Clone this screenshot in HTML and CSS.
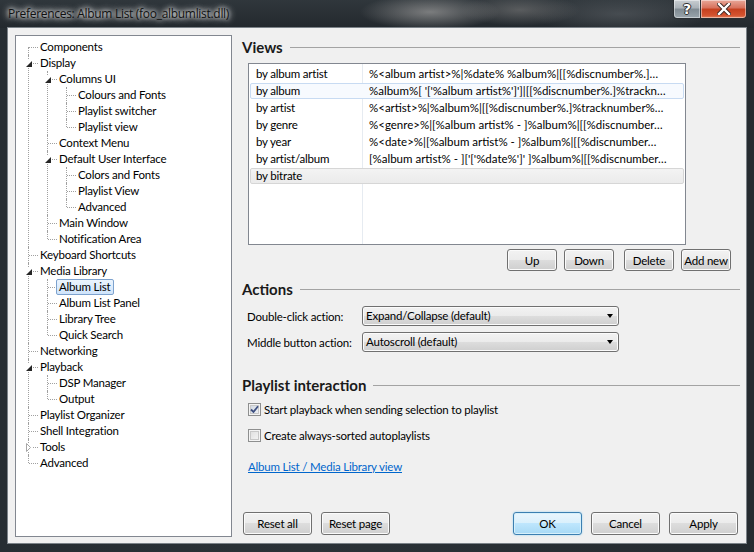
FILE: index.html
```html
<!DOCTYPE html>
<html lang="en">
<head>
<meta charset="utf-8">
<title>Preferences: Album List (foo_albumlist.dll)</title>
<link rel="stylesheet" href="styles.css">
</head>
<body>
<div class="window">
  <!-- Caption -->
  <div class="titlebar">
    <span class="caption">Preferences: Album List (foo_albumlist.dll)</span>
    <div class="caption-buttons">
      <span class="cap-btn help">?</span>
      <span class="cap-btn close">
        <svg width="14" height="12" viewBox="0 0 14 12">
          <path d="M2 1 L12 11 M12 1 L2 11" stroke="#3a2520" stroke-width="4.2" stroke-linecap="square"/>
          <path d="M2 1 L12 11 M12 1 L2 11" stroke="#fff" stroke-width="2.4" stroke-linecap="square"/>
        </svg>
      </span>
    </div>
  </div>

  <div class="client">
    <!-- Page tree -->
    <div class="tree">
      <ul class="tree-root">
        <li><span class="label">Components</span></li>
        <li><span class="exp open"></span><span class="label">Display</span>
          <ul>
            <li><span class="exp open"></span><span class="label">Columns UI</span>
              <ul>
                <li><span class="label">Colours and Fonts</span></li>
                <li><span class="label">Playlist switcher</span></li>
                <li><span class="label">Playlist view</span></li>
              </ul>
            </li>
            <li><span class="label">Context Menu</span></li>
            <li><span class="exp open"></span><span class="label">Default User Interface</span>
              <ul>
                <li><span class="label">Colors and Fonts</span></li>
                <li><span class="label">Playlist View</span></li>
                <li><span class="label">Advanced</span></li>
              </ul>
            </li>
            <li><span class="label">Main Window</span></li>
            <li><span class="label">Notification Area</span></li>
          </ul>
        </li>
        <li><span class="label">Keyboard Shortcuts</span></li>
        <li><span class="exp open"></span><span class="label">Media Library</span>
          <ul>
            <li><span class="label selected">Album List</span></li>
            <li><span class="label">Album List Panel</span></li>
            <li><span class="label">Library Tree</span></li>
            <li><span class="label">Quick Search</span></li>
          </ul>
        </li>
        <li><span class="label">Networking</span></li>
        <li><span class="exp open"></span><span class="label">Playback</span>
          <ul>
            <li><span class="label">DSP Manager</span></li>
            <li><span class="label">Output</span></li>
          </ul>
        </li>
        <li><span class="label">Playlist Organizer</span></li>
        <li><span class="label">Shell Integration</span></li>
        <li><span class="exp shut"></span><span class="label">Tools</span></li>
        <li><span class="label">Advanced</span></li>
      </ul>
    </div>

    <!-- Album List page -->
    <div class="page">
      <div class="section-head">Views</div>
      <div class="listview">
        <div class="lv-row"><span class="lv-name">by album artist</span><span class="lv-fmt">%&lt;album artist&gt;%|%date% %album%|[[%discnumber%.]…</span></div>
        <div class="lv-row selected"><span class="lv-name">by album</span><span class="lv-fmt">%album%[ '['%album artist%']']|[[%discnumber%.]%trackn…</span></div>
        <div class="lv-row"><span class="lv-name">by artist</span><span class="lv-fmt">%&lt;artist&gt;%|%album%|[[%discnumber%.]%tracknumber%…</span></div>
        <div class="lv-row"><span class="lv-name">by genre</span><span class="lv-fmt">%&lt;genre&gt;%|[%album artist% - ]%album%|[[%discnumber…</span></div>
        <div class="lv-row"><span class="lv-name">by year</span><span class="lv-fmt">%&lt;date&gt;%|[%album artist% - ]%album%|[[%discnumber…</span></div>
        <div class="lv-row"><span class="lv-name">by artist/album</span><span class="lv-fmt">[%album artist% - ]['['%date%']' ]%album%|[[%discnumber…</span></div>
        <div class="lv-row focused"><span class="lv-name">by bitrate</span><span class="lv-fmt"></span></div>
      </div>
      <div class="list-buttons">
        <button class="btn small">Up</button>
        <button class="btn small">Down</button>
        <button class="btn small wide-gap">Delete</button>
        <button class="btn small">Add new</button>
      </div>

      <div class="section-head actions-head">Actions</div>
      <div class="field first">
        <label>Double-click action:</label>
        <div class="combo">Expand/Collapse (default)<span class="arrow"></span></div>
      </div>
      <div class="field">
        <label>Middle button action:</label>
        <div class="combo">Autoscroll (default)<span class="arrow"></span></div>
      </div>

      <div class="section-head playlist-head">Playlist interaction</div>
      <div class="check first">
        <span class="box checked">
          <svg width="9" height="9" viewBox="0 0 9 9"><path d="M1 4.5 L3.5 7 L8 1.2" fill="none" stroke="#3d4f80" stroke-width="1.8"/></svg>
        </span>
        <span>Start playback when sending selection to playlist</span>
      </div>
      <div class="check">
        <span class="box"></span>
        <span>Create always-sorted autoplaylists</span>
      </div>
      <a class="link" href="#">Album List / Media Library view</a>

      <div class="footer">
        <button class="btn">Reset all</button>
        <button class="btn">Reset page</button>
        <span class="spacer"></span>
        <button class="btn default">OK</button>
        <button class="btn">Cancel</button>
        <button class="btn">Apply</button>
      </div>
    </div>
  </div>
</div>
</body>
</html>
```

FILE: styles.css
```css
body { margin: 0; background: #1f262b; font-family: Lato, "Liberation Sans", sans-serif; font-size: 11.5px; letter-spacing: -0.2px; color: #000; }
ul { list-style: none; margin: 0; padding: 0; }

/* Window frame */
.window {
    width: 754px;
    height: 552px;
    display: flex;
    flex-direction: column;
    background: linear-gradient(90deg, #262d32 0%, #2b3237 40%, #252b30 100%);
}

.titlebar {
    height: 28px;
    display: flex;
    align-items: flex-start;
    background:
        radial-gradient(ellipse 70px 18px at 430px 12px, rgba(150, 150, 150, 0.75), rgba(150, 150, 150, 0)),
        radial-gradient(ellipse 60px 16px at 520px 10px, rgba(120, 120, 120, 0.6), rgba(120, 120, 120, 0)),
        radial-gradient(ellipse 90px 20px at 620px 14px, rgba(90, 95, 100, 0.6), rgba(90, 95, 100, 0)),
        linear-gradient(#30373c, #23292e);
}
.caption {
    padding: 5px 0 0 8px;
    font-family: "Open Sans", sans-serif;
    font-size: 12px;
    letter-spacing: -0.3px;
    color: #111;
    text-shadow: 0 0 4px #fff, 0 0 7px rgba(255, 255, 255, 0.9), 0 0 10px rgba(255, 255, 255, 0.6);
}
.caption-buttons { margin-left: auto; margin-right: 7px; display: flex; }
.cap-btn {
    height: 18px;
    display: flex;
    align-items: center;
    justify-content: center;
    border: 1px solid #2a2f33;
    border-top: 0;
    box-shadow: inset 0 0 0 1px rgba(255, 255, 255, 0.45);
}
.help {
    width: 26px;
    border-radius: 0 0 0 4px;
    background: linear-gradient(#c9ced2 0%, #a9b1b7 45%, #7f8a92 50%, #9aa5ac 100%);
    font: bold 14px "DejaVu Sans", sans-serif;
    color: #fff;
    text-shadow: 0 0 1px #222, 1px 0 0 #333, -1px 0 0 #333, 0 1px 0 #333, 0 -1px 0 #333;
}
.close {
    width: 45px;
    border-left: 0;
    border-radius: 0 0 4px 0;
    background: linear-gradient(#e8a899 0%, #d7705a 45%, #c5401f 50%, #d4532f 85%, #e2825e 100%);
}

.client {
    flex: 1;
    margin: 0 8px 9px 8px;
    display: flex;
    background: #f0f0f0;
    box-shadow: 0 0 0 1px #7b8288;
}

/* Tree */
.tree {
    width: 217px;
    margin: 7px 0 6px 7px;
    padding-top: 3px;
    background: #fff;
    border: 1px solid #828790;
    box-sizing: border-box;
    height: 502px;
}
.tree-root { padding-left: 12px; }
.tree ul ul { padding-left: 19px; }
.tree li { position: relative; }
.tree li::before {
    content: '';
    position: absolute;
    left: 1px;
    top: 8px;
    width: 9px;
    border-top: 1px dotted #a0a0a0;
}
.tree li::after {
    content: '';
    position: absolute;
    left: 0;
    top: 0;
    bottom: 0;
    border-left: 1px dotted #a0a0a0;
}
.tree li:last-child::after { bottom: auto; height: 8px; }
.tree-root > li:first-child::after { top: 8px; }
.label {
    display: inline-block;
    position: relative;
    z-index: 1;
    height: 14px;
    line-height: 14px;
    margin-left: 9px;
    padding: 0 2px;
    border: 1px solid transparent;
    border-radius: 2px;
    white-space: nowrap;
}
.label.selected {
    border-color: #7da2ce;
    background: linear-gradient(#ebf4fd, #cfe4fb);
}
.exp {
    position: absolute;
    z-index: 2;
    left: -4px;
    top: 4px;
    width: 9px;
    height: 9px;
    background: #fff;
}
.exp.open::after {
    content: '';
    position: absolute;
    left: 2px;
    top: 2px;
    border-style: solid;
    border-width: 0 0 6px 6px;
    border-color: transparent transparent #262626 transparent;
}
.exp.shut::after {
    content: '';
    position: absolute;
    left: 2px;
    top: 0;
    width: 5px;
    height: 9px;
    background: url("data:image/svg+xml,%3Csvg xmlns='http://www.w3.org/2000/svg' width='5' height='9'%3E%3Cpath d='M0.5 0.5 L4.5 4.5 L0.5 8.5 Z' fill='white' stroke='%23a6a6a6'/%3E%3C/svg%3E");
}

/* Right page */
.page {
    flex: 1;
    display: flex;
    flex-direction: column;
    padding: 10px 6px 8px 10px;
}
.section-head {
    display: flex;
    align-items: center;
    height: 18px;
    font-size: 15px;
    font-weight: bold;
    letter-spacing: 0;
    color: #1a1a1a;
}
.section-head::after {
    content: '';
    flex: 1;
    margin-left: 7px;
    border-top: 1px solid #a3a3a3;
}

.listview {
    width: 438px;
    height: 182px;
    margin: 7px 0 0 6px;
    padding: 2px 0 0 0;
    box-sizing: border-box;
    background: #fff linear-gradient(90deg, transparent 113px, #e6ebf1 113px, #e6ebf1 114px, transparent 114px);
    border: 1px solid #828790;
}
.lv-row {
    display: flex;
    height: 14px;
    line-height: 14px;
    margin: 0 1px 1px 1px;
    border: 1px solid transparent;
    border-radius: 2px;
    white-space: nowrap;
}
.lv-row.selected { border-color: #c8dbf2; background: #f7fafe; }
.lv-row.focused { border-color: #d6d6d6; background: linear-gradient(#f3f3f3, #ebebeb); }
.lv-name { width: 107px; padding-left: 5px; }
.lv-fmt { flex: 1; padding-left: 6px; overflow: hidden; letter-spacing: 0; }

.list-buttons {
    display: flex;
    justify-content: flex-end;
    gap: 7px;
    margin-top: 4px;
    padding-right: 9px;
}
.wide-gap { margin-left: 3px; }

.btn {
    width: 69px;
    height: 23px;
    padding: 0;
    border: 1px solid #707070;
    border-radius: 3px;
    background: linear-gradient(#f2f2f2 0%, #ebebeb 50%, #dddddd 50%, #cfcfcf 100%);
    box-shadow: inset 0 0 0 1px #fbfbfb;
    font: 11.5px Lato, "Liberation Sans", sans-serif;
    letter-spacing: -0.2px;
    color: #000;
}
.btn.small { width: 50px; height: 22px; }
.btn.default {
    border-color: #3c7fb1;
    background: linear-gradient(#eaf6fd 0%, #d9f0fc 50%, #bee6fd 50%, #a7d9f5 100%);
    box-shadow: inset 0 0 0 1px #d6f0fb, 0 0 2px #8fd0f3;
}

.actions-head { margin-top: 9px; }
.field { display: flex; align-items: center; padding-left: 5px; margin-top: 6px; }
.field.first { margin-top: 8px; }
.field label { width: 115px; }
.combo {
    position: relative;
    width: 257px;
    height: 20px;
    line-height: 18px;
    box-sizing: border-box;
    padding-left: 3px;
    border: 1px solid #707070;
    border-radius: 3px;
    background: linear-gradient(#f2f2f2 0%, #ebebeb 50%, #dddddd 50%, #cfcfcf 100%);
    box-shadow: inset 0 0 0 1px #fbfbfb;
}
.arrow {
    position: absolute;
    right: 5px;
    top: 7px;
    border-style: solid;
    border-width: 4px 3.5px 0 3.5px;
    border-color: #000 transparent transparent transparent;
}

.playlist-head { margin-top: 24px; }
.check { display: flex; align-items: center; gap: 3px; padding-left: 6px; height: 14px; margin-top: 12px; }
.check.first { margin-top: 8px; }
.box {
    width: 13px;
    height: 13px;
    box-sizing: border-box;
    display: flex;
    align-items: center;
    justify-content: center;
    border: 1px solid #8e8f8f;
    background: linear-gradient(135deg, #dcdcdc, #f8f8f8);
    box-shadow: inset 0 0 0 1px #f4f4f4, inset 0 0 0 2px #c8c8c8;
}
.box.checked { background: linear-gradient(135deg, #cbd3dd, #f4f6f9); }

.link {
    align-self: flex-start;
    margin: 17px 0 0 6px;
    line-height: 16px;
    color: #0066cc;
    text-decoration: underline;
}

.footer { display: flex; gap: 9px; margin-top: auto; padding-left: 1px; padding-right: 2px; }
.spacer { flex: 1; }
```
